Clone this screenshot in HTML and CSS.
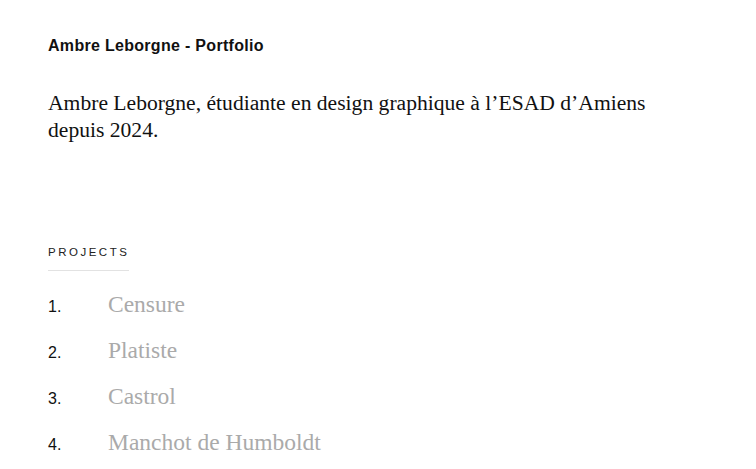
FILE: index.html
```html
<!DOCTYPE html>
<html lang="fr">
<head>
<meta charset="utf-8">
<title>Ambre Leborgne - Portfolio</title>
<link rel="stylesheet" href="styles.css">
</head>
<body>
<main class="page">
  <header class="site-header">
    <h1 class="site-title">Ambre Leborgne - Portfolio</h1>
  </header>
  <p class="intro">Ambre Leborgne, étudiante en design graphique à l’ESAD d’Amiens depuis 2024.</p>
  <section class="projects">
    <h2 class="projects-label">Projects</h2>
    <ol class="project-list">
      <li class="project"><span class="project-num">1.</span><a class="project-name" href="#">Censure</a></li>
      <li class="project"><span class="project-num">2.</span><a class="project-name" href="#">Platiste</a></li>
      <li class="project"><span class="project-num">3.</span><a class="project-name" href="#">Castrol</a></li>
      <li class="project"><span class="project-num">4.</span><a class="project-name" href="#">Manchot de Humboldt</a></li>
    </ol>
  </section>
</main>
</body>
</html>
```

FILE: styles.css
```css
* { box-sizing: border-box; }
html, body { margin: 0; padding: 0; background: #fff; }
body { font-family: "Liberation Sans", Arial, sans-serif; color: #111; }
.page { padding: 37px 48px 0 48px; }
.site-title {
  margin: 0;
  font-size: 16px;
  line-height: 18px;
  font-weight: 700;
  letter-spacing: 0.3px;
  color: #111;
}
.intro {
  margin: 35px 0 0 0;
  max-width: 630px;
  font-family: "Liberation Serif", "Times New Roman", serif;
  font-size: 21.6px;
  line-height: 27px;
  color: #111;
}
.projects { margin-top: 98px; }
.projects-label {
  display: inline-block;
  margin: 0;
  padding-bottom: 11px;
  border-bottom: 1px solid #e2e2e2;
  font-size: 11.5px;
  line-height: 14px;
  font-weight: 400;
  text-transform: uppercase;
  letter-spacing: 2.5px;
  color: #222;
}
.project-list { list-style: none; margin: 20px 0 0 0; padding: 0; display: flex; flex-direction: column; gap: 16px; }
.project { display: flex; align-items: baseline; height: 30px; }
.project-num { width: 60px; font-size: 16px; color: #111; }
.project-name {
  font-family: "Liberation Serif", "Times New Roman", serif;
  font-size: 23.5px;
  color: #aaa;
  text-decoration: none;
}
```
